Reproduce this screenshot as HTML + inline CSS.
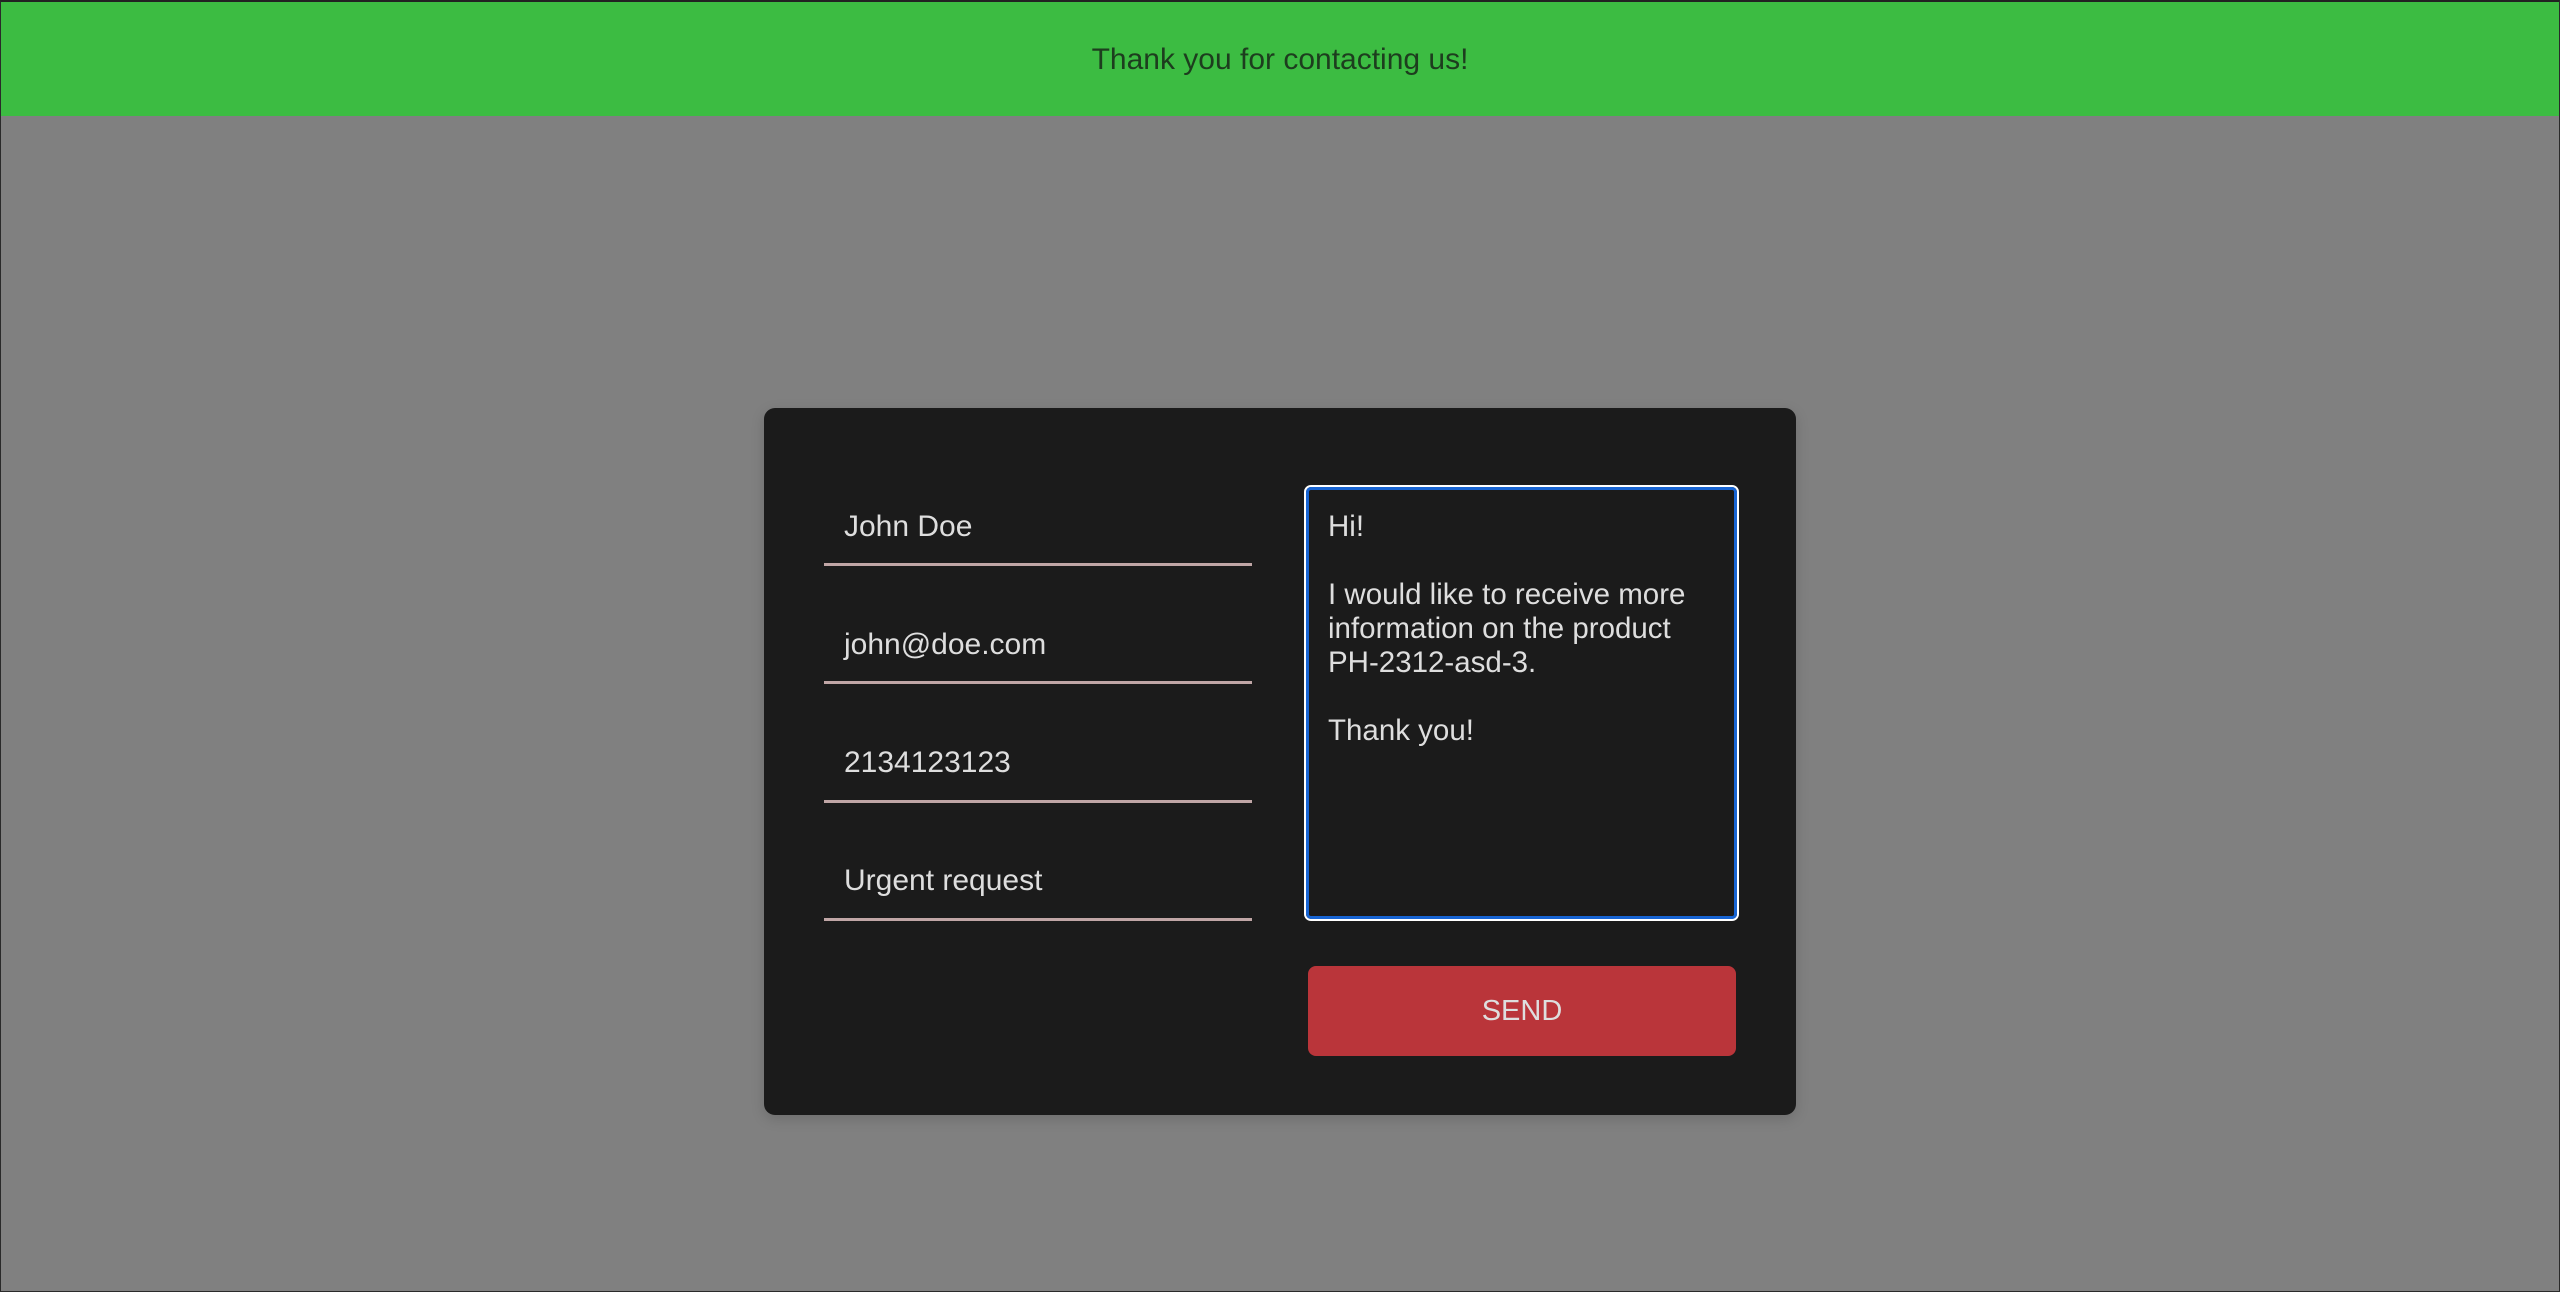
<!DOCTYPE html>
<html><head><meta charset="utf-8"><style>
html,body{margin:0;padding:0;}
body{width:2560px;height:1292px;background:#808080;position:relative;overflow:hidden;font-family:"Liberation Sans",Arial,sans-serif;box-sizing:border-box;border:1px solid #2a2a2a;border-top:2px solid #222;}
.banner{position:absolute;left:0;top:0;width:2558px;height:114px;background:#3cbc42;color:#1d3d1e;font-size:30px;text-align:center;line-height:116px;}
.card{position:absolute;left:763px;top:406px;width:1032px;height:707px;background:#1b1b1b;border-radius:11px;box-shadow:0 4px 14px rgba(0,0,0,0.15);}
.inp{position:absolute;left:60px;width:428px;height:3px;background:#c0a6a6;}
.txt{position:absolute;left:80px;color:#dedede;font-size:30px;}
.ta{position:absolute;left:540px;top:77px;width:431px;height:432px;border:2px solid #fff;border-radius:7px;}
.ta .in{position:absolute;left:0;top:0;right:0;bottom:0;border:3px solid #1764d3;border-radius:5px;}
.tt{position:absolute;left:19px;top:20px;color:#dedede;font-size:29.5px;line-height:34px;white-space:pre;}
.btn{position:absolute;left:544px;top:558px;width:428px;height:90px;background:#ba353a;border-radius:8px;color:#dedede;font-size:29px;text-align:center;line-height:90px;}
</style></head><body>
<div class="banner">Thank you for contacting us!</div>
<div class="card">
 <div class="txt" style="top:102px">John Doe</div><div class="inp" style="top:155px"></div>
 <div class="txt" style="top:220px">john@doe.com</div><div class="inp" style="top:273px"></div>
 <div class="txt" style="top:338px">2134123123</div><div class="inp" style="top:392px"></div>
 <div class="txt" style="top:456px">Urgent request</div><div class="inp" style="top:510px"></div>
 <div class="ta"><div class="in"><div class="tt">Hi!

I would like to receive more
information on the product
PH-2312-asd-3.

Thank you!</div></div></div>
 <div class="btn">SEND</div>
</div>
</body></html>
